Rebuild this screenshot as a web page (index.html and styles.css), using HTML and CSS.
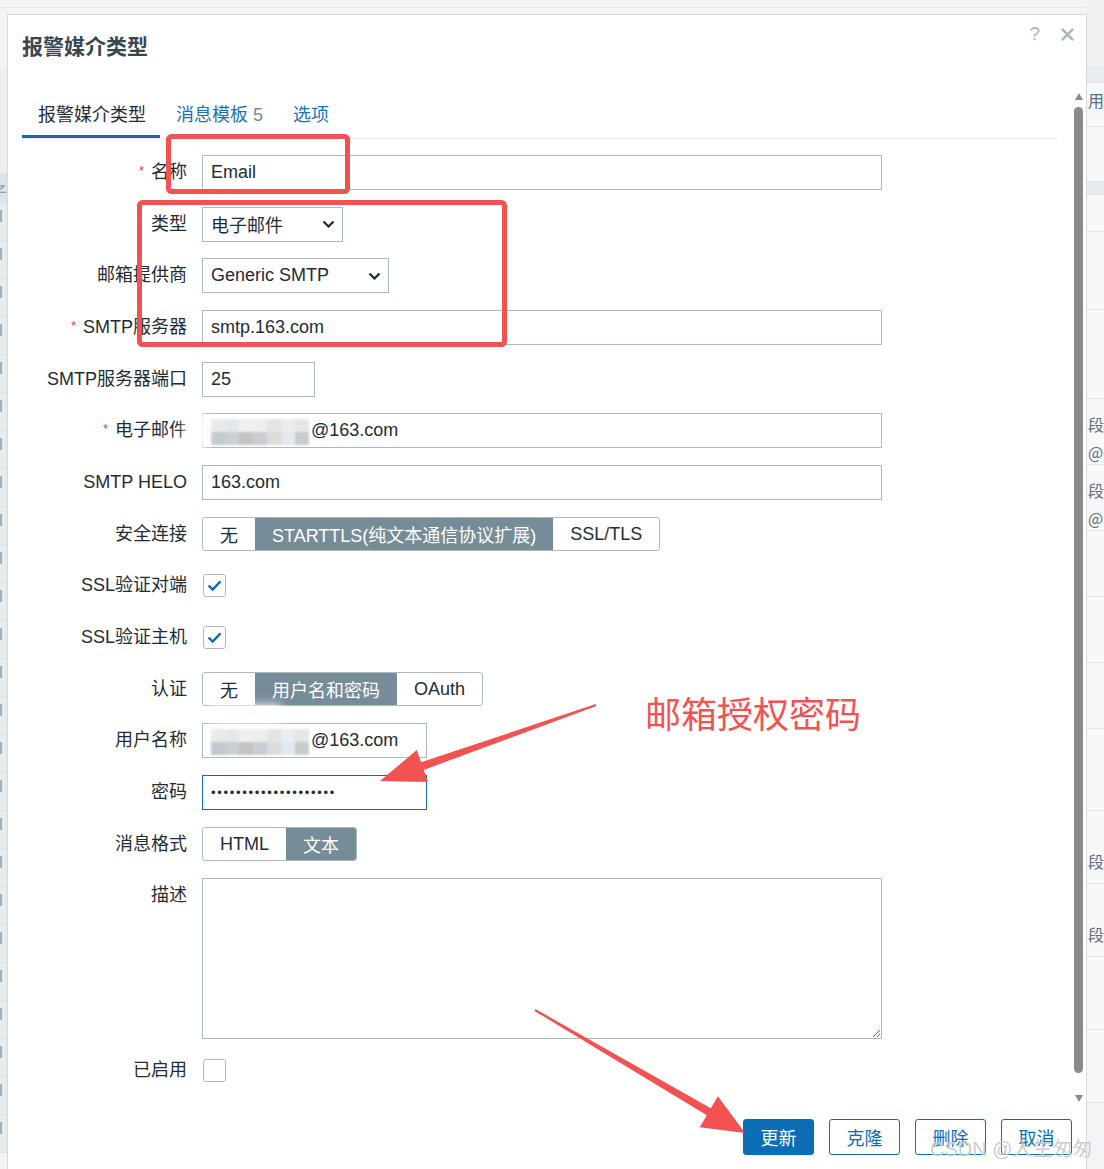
FILE: index.html
```html
<!DOCTYPE html>
<html lang="zh-CN">
<head>
<meta charset="utf-8">
<title>报警媒介类型</title>
<link rel="stylesheet" href="styles.css">
</head>
<body>
<div class="page">
  <aside class="side-left">
    <div class="sl-top"></div>
    <div class="sl-head">子</div>
    <div class="sl-row"></div><div class="sl-row"></div><div class="sl-row"></div><div class="sl-row"></div>
    <div class="sl-row"></div><div class="sl-row"></div><div class="sl-row"></div><div class="sl-row"></div>
    <div class="sl-row"></div><div class="sl-row"></div><div class="sl-row"></div><div class="sl-row"></div>
    <div class="sl-row"></div><div class="sl-row"></div><div class="sl-row"></div><div class="sl-row"></div>
    <div class="sl-row"></div><div class="sl-row"></div><div class="sl-row"></div><div class="sl-row"></div>
    <div class="sl-row"></div><div class="sl-row"></div><div class="sl-row"></div><div class="sl-row"></div>
    <div class="sl-row"></div>
  </aside>

  <section class="dialog">
    <header class="dlg-head">
      <h2 class="dlg-title">报警媒介类型</h2>
      <div class="dlg-tools">
        <span class="help">?</span>
        <svg class="close" viewBox="0 0 16 16"><path d="M2 2L14 14M14 2L2 14"/></svg>
      </div>
    </header>

    <div class="dlg-main">
      <div class="dlg-body">
        <nav class="tabs">
          <span class="tab active">报警媒介类型</span>
          <span class="tab">消息模板 <span class="count">5</span></span>
          <span class="tab">选项</span>
        </nav>

        <div class="form">
          <div class="row">
            <label class="label"><span class="star">*</span>名称</label>
            <div class="field w-full">Email</div>
          </div>
          <div class="row">
            <label class="label">类型</label>
            <div class="field select w-type"><span>电子邮件</span><svg class="chev" viewBox="0 0 12 8"><path d="M1 1.5l5 5 5-5"/></svg></div>
          </div>
          <div class="row">
            <label class="label">邮箱提供商</label>
            <div class="field select w-prov"><span>Generic SMTP</span><svg class="chev" viewBox="0 0 12 8"><path d="M1 1.5l5 5 5-5"/></svg></div>
          </div>
          <div class="row">
            <label class="label"><span class="star">*</span>SMTP服务器</label>
            <div class="field w-full">smtp.163.com</div>
          </div>
          <div class="row">
            <label class="label">SMTP服务器端口</label>
            <div class="field w-port">25</div>
          </div>
          <div class="row">
            <label class="label"><span class="star">*</span>电子邮件</label>
            <div class="field w-full"><span class="mosaic left"><i></i><i></i><i></i><i></i><i></i><i></i><i></i><i></i><i></i><i></i><i></i><i></i><i></i><i></i></span>@163.com</div>
          </div>
          <div class="row">
            <label class="label">SMTP HELO</label>
            <div class="field w-full">163.com</div>
          </div>
          <div class="row">
            <label class="label">安全连接</label>
            <div class="seg"><span>无</span><span class="on">STARTTLS(纯文本通信协议扩展)</span><span>SSL/TLS</span></div>
          </div>
          <div class="row">
            <label class="label">SSL验证对端</label>
            <span class="cb"><svg viewBox="0 0 16 12"><path d="M1.5 6l4.5 4.5L14.5 1.5"/></svg></span>
          </div>
          <div class="row">
            <label class="label">SSL验证主机</label>
            <span class="cb"><svg viewBox="0 0 16 12"><path d="M1.5 6l4.5 4.5L14.5 1.5"/></svg></span>
          </div>
          <div class="row">
            <label class="label">认证</label>
            <div class="seg"><span>无</span><span class="on">用户名和密码</span><span>OAuth</span></div>
          </div>
          <div class="row">
            <label class="label">用户名称</label>
            <div class="field w-user"><span class="mosaic up"><i></i><i></i><i></i><i></i><i></i><i></i><i></i><i></i><i></i><i></i><i></i><i></i><i></i><i></i></span>@163.com</div>
          </div>
          <div class="row">
            <label class="label">密码</label>
            <div class="field w-user focus"><span class="dots">••••••••••••••••••••</span></div>
          </div>
          <div class="row">
            <label class="label">消息格式</label>
            <div class="seg"><span>HTML</span><span class="on">文本</span></div>
          </div>
          <div class="row tall">
            <label class="label">描述</label>
            <textarea class="ta"></textarea>
          </div>
          <div class="row last">
            <label class="label">已启用</label>
            <span class="cb"></span>
          </div>
        </div>
      </div>

      <div class="scroll">
        <span class="arr-up"></span>
        <span class="thumb"></span>
        <span class="arr-down"></span>
      </div>
    </div>

    <footer class="dlg-foot">
      <button class="btn primary">更新</button>
      <button class="btn">克隆</button>
      <button class="btn">删除</button>
      <button class="btn">取消</button>
    </footer>
  </section>

  <aside class="side-right">
    <div class="sr-top"></div>
    <div class="sr-head"></div>
    <div class="sr-row r44">用</div>
    <div class="sr-row r55"></div>
    <div class="sr-band"></div>
    <div class="sr-row r37"></div>
    <div class="sr-row r78"></div>
    <div class="sr-row r89"></div>
    <div class="sr-row r66 two">段全<br>@1</div>
    <div class="sr-row r66 two">段全<br>@1</div>
    <div class="sr-row r66"></div>
    <div class="sr-row r66"></div>
    <div class="sr-row r66"></div>
    <div class="sr-row r82"></div>
    <div class="sr-row r73">段全</div>
    <div class="sr-row r73">段全</div>
    <div class="sr-row r73"></div>
    <div class="sr-row r73"></div>
  </aside>
</div>

<svg class="annot" viewBox="0 0 1104 1169">
  <rect x="168.5" y="136.5" width="179" height="55" rx="3"/>
  <rect x="139.5" y="202.5" width="365" height="142" rx="3"/>
  <polygon class="arrow" points="595.7,704.1 421.1,762.3 416.8,750.1 380,781 428,782.1 423.7,769.9 596.3,705.9"/>
  <polygon class="arrow" points="535.5,1009.1 710.8,1108.3 717.9,1096.3 745,1133 699.7,1127.3 706.8,1115.3 534.5,1010.9"/>
</svg>
<div class="note">邮箱授权密码</div>
<div class="wm">CSDN @人生匆匆</div>
</body>
</html>
```

FILE: styles.css
```css
* { box-sizing: border-box; }

html, body { margin: 0; padding: 0; }

body {
  width: 1104px;
  height: 1169px;
  overflow: hidden;
  position: relative;
  background: linear-gradient(#f3f4f5 0 7px, #e3e6e8 7px 8px, #f3f4f5 8px);
  font-family: "Liberation Sans", "Noto Sans CJK SC", sans-serif;
  font-size: 18px;
  color: #1f2c33;
}

.page {
  display: flex;
  height: 1169px;
}

/* ---------- left background sliver ---------- */
.side-left {
  width: 7px;
  flex: none;
  overflow: hidden;
  display: flex;
  flex-direction: column;
}
.sl-top { height: 66px; flex: none; }
.sl-head {
  height: 137px;
  flex: none;
  background: linear-gradient(#eceef0 0 107px, #dfe3e6 107px);
  color: #8ea0ab;
  font-family: "Noto Sans CJK SC", sans-serif;
  font-size: 16px;
  line-height: 30px;
  padding-top: 110px;
  text-indent: -9px;
  white-space: nowrap;
}
.sl-row {
  height: 38px;
  flex: none;
  background: #e8ebed;
  border-bottom: 1px solid #dde1e4;
  position: relative;
}
.sl-row::before {
  content: "";
  position: absolute;
  left: 0;
  top: 7px;
  width: 2px;
  height: 12px;
  background: #9fb0ba;
}

/* ---------- right background sliver ---------- */
.side-right {
  flex: 1;
  overflow: hidden;
  display: flex;
  flex-direction: column;
  white-space: nowrap;
  color: #5f707b;
  font-family: "Noto Sans CJK SC", sans-serif;
  font-size: 16px;
}
.sr-top { height: 66px; flex: none; background: #eff1f3; }
.sr-head { height: 17px; flex: none; background: #e9ecee; border-bottom: 1px solid #dde2e5; }
.sr-row {
  flex: none;
  background: #f7f8f9;
  border-bottom: 1px solid #e1e5e8;
  padding-left: 1px;
}
.sr-band { height: 13px; flex: none; background: #e8ebed; border-bottom: 1px solid #dde2e5; }
.r44 { height: 44px; line-height: 34px; color: #4f6f88; }
.r55 { height: 55px; }
.r37 { height: 37px; }
.r78 { height: 78px; }
.r89 { height: 89px; }
.r66 { height: 66px; }
.r82 { height: 82px; }
.r73 { height: 73px; line-height: 100px; }
.two { line-height: 28px; padding-top: 11px; }

/* ---------- dialog ---------- */
.dialog {
  width: 1080px;
  flex: none;
  margin-top: 14px;
  background: #fff;
  border: 1px solid #d4dadd;
  border-bottom: none;
  display: flex;
  flex-direction: column;
}

.dlg-head {
  display: flex;
  align-items: flex-start;
  padding: 18px 11px 29px 14px;
}
.dlg-title {
  margin: 0;
  font-size: 21px;
  font-weight: bold;
  line-height: 28px;
  color: #38464f;
}
.dlg-tools {
  margin-left: auto;
  margin-top: -9px;
  height: 20px;
  display: flex;
  align-items: center;
  gap: 20px;
}
.help {
  font-size: 19px;
  line-height: 20px;
  color: #a9b6bc;
}
.close {
  width: 15px;
  height: 15px;
  fill: none;
  stroke: #a9b6bc;
  stroke-width: 2.6;
}

.dlg-main {
  display: flex;
  height: 1015px;
  padding-right: 3px;
}
.dlg-body {
  flex: 1;
  min-width: 0;
  padding: 0 17px 0 14px;
  overflow: hidden;
}

/* scrollbar */
.scroll {
  width: 9px;
  flex: none;
  display: flex;
  flex-direction: column;
  align-items: center;
  padding: 3px 0 3px;
}
.arr-up, .arr-down {
  width: 0;
  height: 0;
  flex: none;
  border-left: 4.5px solid transparent;
  border-right: 4.5px solid transparent;
}
.arr-up { border-bottom: 7px solid #8a8a8a; }
.arr-down { border-top: 7px solid #8a8a8a; margin-top: 22px; }
.thumb {
  width: 9px;
  flex: 1;
  margin-top: 7px;
  background: #8a8a8a;
  border-radius: 5px;
}

/* tabs */
.tabs {
  display: flex;
  border-bottom: 1px solid #e8ebed;
  margin-bottom: 16px;
}
.tab {
  padding: 14px 14px 9px 16px;
  line-height: 22px;
  border-bottom: 3px solid transparent;
  color: #1c72b6;
  white-space: nowrap;
}
.tab.active {
  color: #1f2c33;
  border-bottom-color: #0b6eb4;
}
.count { color: #6a8ea9; }

/* form */
.form {
  display: flex;
  flex-direction: column;
  gap: 16.67px;
}
.row {
  display: grid;
  grid-template-columns: 165px 1fr;
  column-gap: 15px;
  align-items: center;
  height: 35px;
}
.row.tall { height: auto; }
.row.last { margin-top: -3px; }
.label {
  align-self: start;
  text-align: right;
  line-height: 35px;
  white-space: nowrap;
}
.star {
  color: #e33734;
  font-size: 13px;
  line-height: 0;
  vertical-align: 3px;
  margin-right: 7px;
}

.field {
  height: 35px;
  border: 1px solid #acbbc2;
  background: #fff;
  padding: 0 8px;
  display: flex;
  align-items: center;
  white-space: nowrap;
  justify-self: start;
}
.field.focus { border-color: #0b6eb4; }
.w-full { width: 680px; }
.w-type { width: 141px; }
.w-prov { width: 187px; }
.w-port { width: 113px; }
.w-user { width: 225px; }

.select {
  justify-content: space-between;
  padding-right: 7px;
}
.chev {
  width: 13px;
  height: 8px;
  fill: none;
  stroke: #1f2c33;
  stroke-width: 2.3;
}

.dots {
  font-size: 13px;
  letter-spacing: 1.7px;
  color: #1f2c33;
}

/* blurred (privacy) block */
.mosaic {
  position: relative;
  display: grid;
  grid-template-columns: repeat(7, 14px);
  grid-auto-rows: 13px;
  width: 98px;
  margin-right: 2px;
  margin-top: 2px;
  filter: blur(1px);
}
.mosaic::before {
  content: "";
  position: absolute;
  background: #fff;
  filter: blur(5px);
}
.mosaic.left::before { left: -26px; top: -6px; width: 22px; height: 36px; }
.mosaic.up::before { left: 0; top: -24px; width: 70px; height: 18px; }
.mosaic i:nth-child(1) { background: #e8eaec; }
.mosaic i:nth-child(2) { background: #e5e8ea; }
.mosaic i:nth-child(3) { background: #eeeff0; }
.mosaic i:nth-child(4) { background: #eeeeee; }
.mosaic i:nth-child(5) { background: #e2e4e6; }
.mosaic i:nth-child(6) { background: #e9edf0; }
.mosaic i:nth-child(7) { background: #e4e6e8; }
.mosaic i:nth-child(8) { background: #c3c9ce; }
.mosaic i:nth-child(9) { background: #cbcfd2; }
.mosaic i:nth-child(10) { background: #c5c3c0; }
.mosaic i:nth-child(11) { background: #c9cdd1; }
.mosaic i:nth-child(12) { background: #dddbd9; }
.mosaic i:nth-child(13) { background: #e2e8ee; }
.mosaic i:nth-child(14) { background: #c9ccce; }

/* segmented buttons */
.seg {
  justify-self: start;
  display: flex;
  height: 34px;
  border: 1px solid #acbbc2;
  border-radius: 3px;
  overflow: hidden;
  white-space: nowrap;
}
.seg span {
  display: flex;
  align-items: center;
  padding: 0 17px;
}
.seg .on {
  background: #768d99;
  color: #fff;
}

/* checkbox */
.cb {
  justify-self: start;
  margin-left: 1px;
  width: 23px;
  height: 23px;
  border: 1px solid #acbbc2;
  border-radius: 3px;
  display: flex;
  align-items: center;
  justify-content: center;
}
.cb svg {
  width: 15px;
  height: 11px;
  fill: none;
  stroke: #0b6eb4;
  stroke-width: 2.6;
}

.ta {
  width: 680px;
  height: 161px;
  border: 1px solid #acbbc2;
  border-radius: 0;
  margin: 0;
  padding: 6px 8px;
  font: inherit;
  justify-self: start;
}

/* footer */
.dlg-foot {
  display: flex;
  justify-content: flex-end;
  gap: 15px;
  padding: 14px 14px 0;
}
.btn {
  width: 71px;
  height: 36px;
  border: 1px solid #0b6eb4;
  border-radius: 3px;
  background: #fff;
  color: #0b6eb4;
  font: inherit;
  padding: 0;
}
.btn.primary {
  background: #0b6eb4;
  color: #fff;
}

/* annotations (drawn over the screenshot) */
.annot {
  position: absolute;
  left: 0;
  top: 0;
  width: 1104px;
  height: 1169px;
  pointer-events: none;
}
.annot rect {
  fill: none;
  stroke: #f35252;
  stroke-width: 5;
}
.annot .arrow { fill: #f35252; }

.note {
  position: absolute;
  left: 645px;
  top: 690px;
  font-family: "Noto Sans CJK SC", sans-serif;
  font-size: 36px;
  line-height: 44px;
  color: #f35252;
  white-space: nowrap;
}

.wm {
  position: absolute;
  left: 930px;
  top: 1136px;
  font-size: 20px;
  line-height: 26px;
  color: rgba(140, 140, 140, 0.45);
  text-shadow: 0 0 1px rgba(255, 255, 255, 0.9);
  white-space: nowrap;
}
```
